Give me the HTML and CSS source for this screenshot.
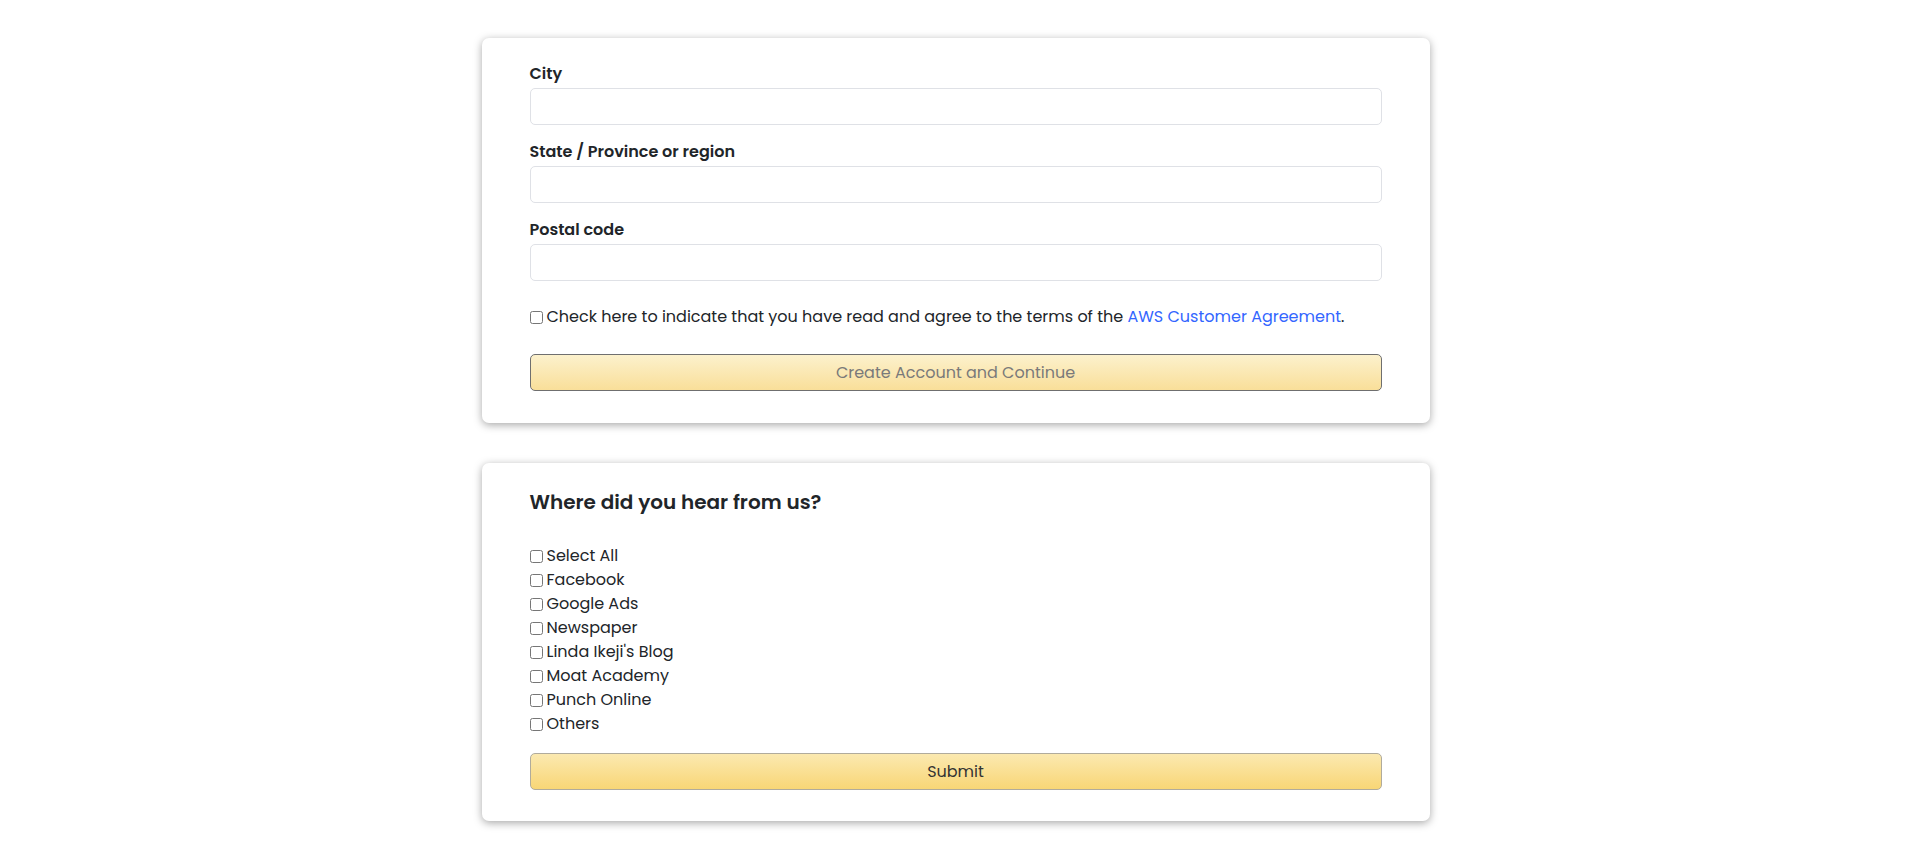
FILE: index.html
```html
<!DOCTYPE html>
<html lang="en">
<head>
<meta charset="utf-8">
<title>Sign up</title>
<link rel="stylesheet" href="styles.css">
</head>
<body>
<main class="page">
  <section class="card card-address">
    <form class="form">
      <div class="field">
        <label class="label" for="city">City</label>
        <input class="input" id="city" type="text">
      </div>
      <div class="field">
        <label class="label" for="state">State / Province or region</label>
        <input class="input" id="state" type="text">
      </div>
      <div class="field">
        <label class="label" for="postal">Postal code</label>
        <input class="input" id="postal" type="text">
      </div>
      <label class="agree">
        <input class="check" type="checkbox">
        <span>Check here to indicate that you have read and agree to the terms of the <a class="link" href="#">AWS Customer Agreement</a>.</span>
      </label>
      <button class="btn btn-create" type="button" disabled>Create Account and Continue</button>
    </form>
  </section>

  <section class="card card-survey">
    <h2 class="title">Where did you hear from us?</h2>
    <ul class="options">
      <li><label class="option"><input class="check" type="checkbox"><span>Select All</span></label></li>
      <li><label class="option"><input class="check" type="checkbox"><span>Facebook</span></label></li>
      <li><label class="option"><input class="check" type="checkbox"><span>Google Ads</span></label></li>
      <li><label class="option"><input class="check" type="checkbox"><span>Newspaper</span></label></li>
      <li><label class="option"><input class="check" type="checkbox"><span>Linda Ikeji's Blog</span></label></li>
      <li><label class="option"><input class="check" type="checkbox"><span>Moat Academy</span></label></li>
      <li><label class="option"><input class="check" type="checkbox"><span>Punch Online</span></label></li>
      <li><label class="option"><input class="check" type="checkbox"><span>Others</span></label></li>
    </ul>
    <button class="btn btn-submit" type="button">Submit</button>
  </section>
</main>
</body>
</html>
```

FILE: styles.css
```css
* { box-sizing: border-box; }

html, body {
  margin: 0;
  padding: 0;
  background: #ffffff;
}

body {
  font-family: "Poppins", "Open Sans", "Noto Sans", sans-serif;
  font-size: 16px;
  color: #212529;
  line-height: 24px;
}

.page {
  display: flex;
  flex-direction: column;
  align-items: center;
  gap: 40px;
  padding: 38px 0 46px;
}

.card {
  width: 948px;
  background: #fff;
  border-radius: 7px;
  box-shadow: 0 2px 8px rgba(0, 0, 0, 0.35);
  padding: 24px 48px 32px;
}

.form {
  display: flex;
  flex-direction: column;
}

.field {
  display: flex;
  flex-direction: column;
  margin-bottom: 15px;
}

.label {
  font-weight: 600;
  font-size: 16px;
  margin-bottom: 2px;
}

.input {
  height: 37px;
  width: 100%;
  border: 1px solid #dfe1e6;
  border-radius: 5px;
  background: #fff;
  font: inherit;
  padding: 6px 12px;
}

.check {
  width: 13px;
  height: 13px;
  margin: 0 4px 0 0;
  flex: none;
}

.agree {
  display: flex;
  align-items: center;
  height: 24px;
  margin: 9px 0 25px;
}

.link {
  color: #3366ff;
  text-decoration: none;
}

.btn {
  height: 37px;
  width: 100%;
  border-radius: 5px;
  font: inherit;
  font-size: 16px;
  cursor: pointer;
}

.btn-create {
  border: 1px solid #6f6f6f;
  background: linear-gradient(to bottom, #fcf1cd, #f9df99);
  color: #7a7a7a;
}

.btn-submit {
  border: 1px solid #b0ab9c;
  background: linear-gradient(to bottom, #fbe9b0, #f8d676);
  color: #333;
}

.card-survey {
  padding-bottom: 31px;
}

.title {
  margin: 0 0 27px;
  font-size: 20px;
  font-weight: 600;
  line-height: 30px;
}

.options {
  list-style: none;
  margin: 0 0 17px;
  padding: 0;
}

.option {
  display: flex;
  align-items: center;
  height: 24px;
}
```
